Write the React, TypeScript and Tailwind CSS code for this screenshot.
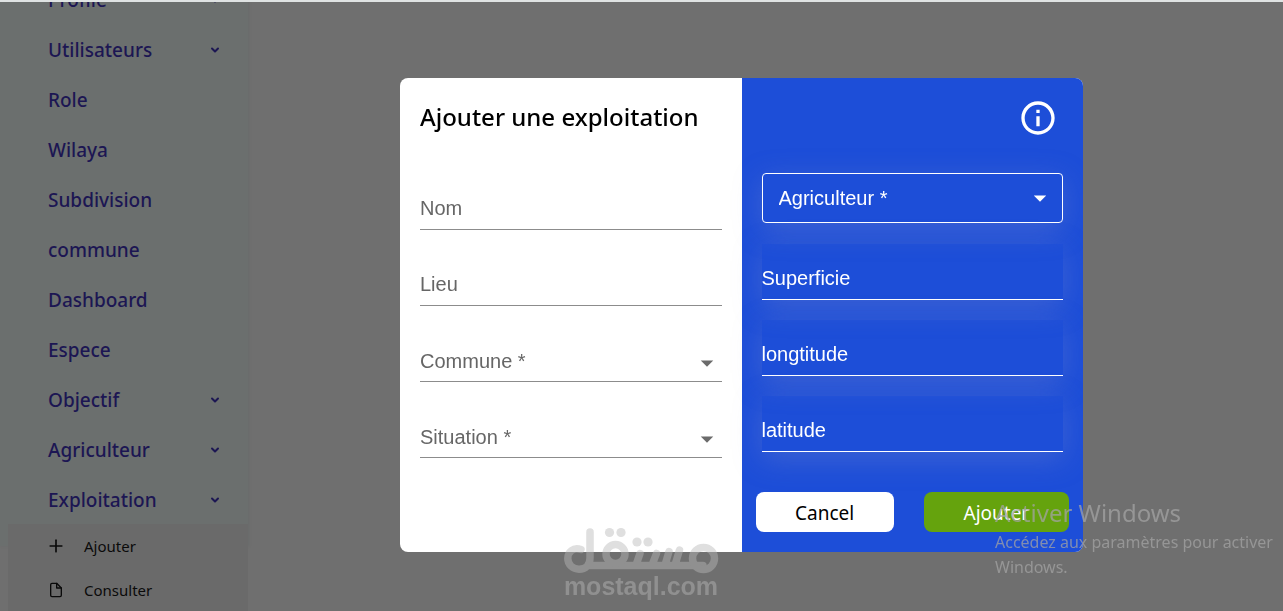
import React from "react";
import { FiChevronDown, FiFile, FiPlus } from "react-icons/fi";
import { MdArrowDropDown, MdInfoOutline } from "react-icons/md";

type NavEntry = { label: string; expandable?: boolean };

const navEntries: NavEntry[] = [
  { label: "Profile", expandable: true },
  { label: "Utilisateurs", expandable: true },
  { label: "Role" },
  { label: "Wilaya" },
  { label: "Subdivision" },
  { label: "commune" },
  { label: "Dashboard" },
  { label: "Espece" },
  { label: "Objectif", expandable: true },
  { label: "Agriculteur", expandable: true },
  { label: "Exploitation", expandable: true },
];

const subEntries = [
  { label: "Ajouter", icon: FiPlus, iconClass: "size-4 scale-125" },
  { label: "Consulter", icon: FiFile, iconClass: "size-4" },
];

function Sidebar() {
  return (
    <aside className="h-[546px] w-[248px] shrink-0 bg-[#6b6f6e] shadow-[1px_0_2px_#686b6b]">
      <nav className="-mt-[25px]">
        <ul>
          {navEntries.map((entry) => (
            <li key={entry.label}>
              <a
                href="#"
                className="flex h-[50px] items-center justify-between pr-[27px] pl-12 text-[19px] font-medium text-[#1c1653]"
              >
                {entry.label}
                {entry.expandable && <FiChevronDown className="size-3" strokeWidth={4} />}
              </a>
            </li>
          ))}
        </ul>
        <ul className="-mt-px ml-2 bg-[#6a6a6a]">
          {subEntries.map(({ label, icon: Icon, iconClass }) => (
            <li key={label}>
              <a href="#" className="flex h-11 items-center gap-5 pl-10 text-[15px] text-[#0a0a0a]">
                <Icon className={iconClass} />
                {label}
              </a>
            </li>
          ))}
        </ul>
      </nav>
    </aside>
  );
}

const lineControl =
  "h-14 w-full appearance-none rounded-none border-b bg-transparent pt-[14px] text-xl outline-none";

function PlainField({ label }: { label: string }) {
  return (
    <input
      aria-label={label}
      placeholder={label}
      className={`${lineControl} border-[#8c8c8c] text-[#666666] placeholder:text-[#666666]`}
    />
  );
}

function PlainSelect({ label }: { label: string }) {
  return (
    <div className="relative h-14">
      <select aria-label={label} className={`${lineControl} border-[#8c8c8c] text-[#666666]`}>
        <option>{label}</option>
      </select>
      <MdArrowDropDown className="pointer-events-none absolute right-0 bottom-1 size-[30px] text-[#6b6b6b]" />
    </div>
  );
}

function BlueField({ label }: { label: string }) {
  return (
    <input
      aria-label={label}
      placeholder={label}
      className={`${lineControl} border-white text-white shadow-[0_7px_29px_0_rgba(120,135,205,0.36)] placeholder:text-white`}
    />
  );
}

function AddDialog() {
  return (
    <form
      role="dialog"
      aria-labelledby="dialog-title"
      className="grid w-full max-w-[683px] grid-cols-2 overflow-hidden rounded-lg bg-white"
    >
      <section className="px-5 pt-[19px]">
        <h1 id="dialog-title" className="mb-[37px] text-2xl leading-10 font-medium whitespace-nowrap text-black">
          Ajouter une exploitation
        </h1>
        <div className="flex flex-col gap-5 font-['Liberation_Sans',Arial,sans-serif]">
          <PlainField label="Nom" />
          <PlainField label="Lieu" />
          <PlainSelect label="Commune *" />
          <PlainSelect label="Situation *" />
        </div>
      </section>
      <section className="bg-[#1d4ed8] pt-5 pb-5">
        <div className="mb-[35px] flex justify-end pr-[25px]">
          <MdInfoOutline className="size-10 text-white" />
        </div>
        <div className="flex flex-col gap-5 px-5 font-['Liberation_Sans',Arial,sans-serif]">
          <div className="relative mb-px">
            <select
              aria-label="Agriculteur"
              className="block h-[50px] w-full appearance-none rounded border border-white bg-transparent px-4 text-xl text-white shadow-[0_7px_29px_0_rgba(120,135,205,0.36)] outline-none"
            >
              <option>Agriculteur *</option>
            </select>
            <MdArrowDropDown className="pointer-events-none absolute top-[10px] right-2 size-[30px] text-white" />
          </div>
          <BlueField label="Superficie" />
          <BlueField label="longtitude" />
          <BlueField label="latitude" />
        </div>
        <div className="mt-10 flex gap-[30px] px-[14px] text-[19px]">
          <button type="button" className="h-10 flex-[138] rounded-lg bg-white pt-0.5 text-black">
            Cancel
          </button>
          <button type="submit" className="h-10 flex-[145] rounded-lg bg-[#65a30d] pt-0.5 text-white">
            Ajouter
          </button>
        </div>
      </section>
    </form>
  );
}

function MostaqlMark() {
  return (
    <div className="pointer-events-none fixed bottom-[13px] left-[563px] flex flex-col items-center font-['Liberation_Sans',Arial,sans-serif] text-[#b8b8b8] opacity-45">
      <svg viewBox="0 0 156 48" className="h-12 w-[156px]" fill="none" stroke="currentColor" strokeWidth="7.500" strokeLinecap="round" strokeLinejoin="round" aria-hidden="true">
        <path d="M18 23.500C10 21 4.800 26 4.800 32.500C4.800 38.500 9.800 43.200 16 43.200C22.500 43.200 27 38.500 27 32V6M25 39.500H140M77 27.500L73 39M93.500 27.500L89 39M106 25.500L102 39M116.500 24L112 39" />
        <circle cx="52.500" cy="28" r="9.500" />
        <circle cx="140.500" cy="32.500" r="11" />
        <g fill="currentColor" stroke="none">
          <circle cx="46.500" cy="6.500" r="4.600" />
          <circle cx="58" cy="6.500" r="4.600" />
          <circle cx="74" cy="16" r="4.600" />
          <circle cx="85" cy="16" r="4.600" />
        </g>
      </svg>
      <span className="text-[25px] leading-6 font-bold">mostaql.com</span>
    </div>
  );
}

function ActivationNotice() {
  return (
    <div className="pointer-events-none fixed right-0 bottom-[31px] w-72 whitespace-nowrap text-[#a3a3a3] opacity-75">
      <p className="mb-px text-2xl leading-8">Activer Windows</p>
      <p className="text-base leading-[25px]">
        Accédez aux paramètres pour activer
        <br />
        Windows.
      </p>
    </div>
  );
}

export default function App() {
  return (
    <div className="flex h-screen overflow-hidden bg-[#6f6f6f] font-['Segoe_UI','Noto_Sans',sans-serif]">
      <Sidebar />
      <main className="fixed inset-0 flex items-center justify-center border-t-2 border-[#dfe3e3] pt-[17px] pl-[200px]">
        <AddDialog />
      </main>
      <MostaqlMark />
      <ActivationNotice />
    </div>
  );
}
